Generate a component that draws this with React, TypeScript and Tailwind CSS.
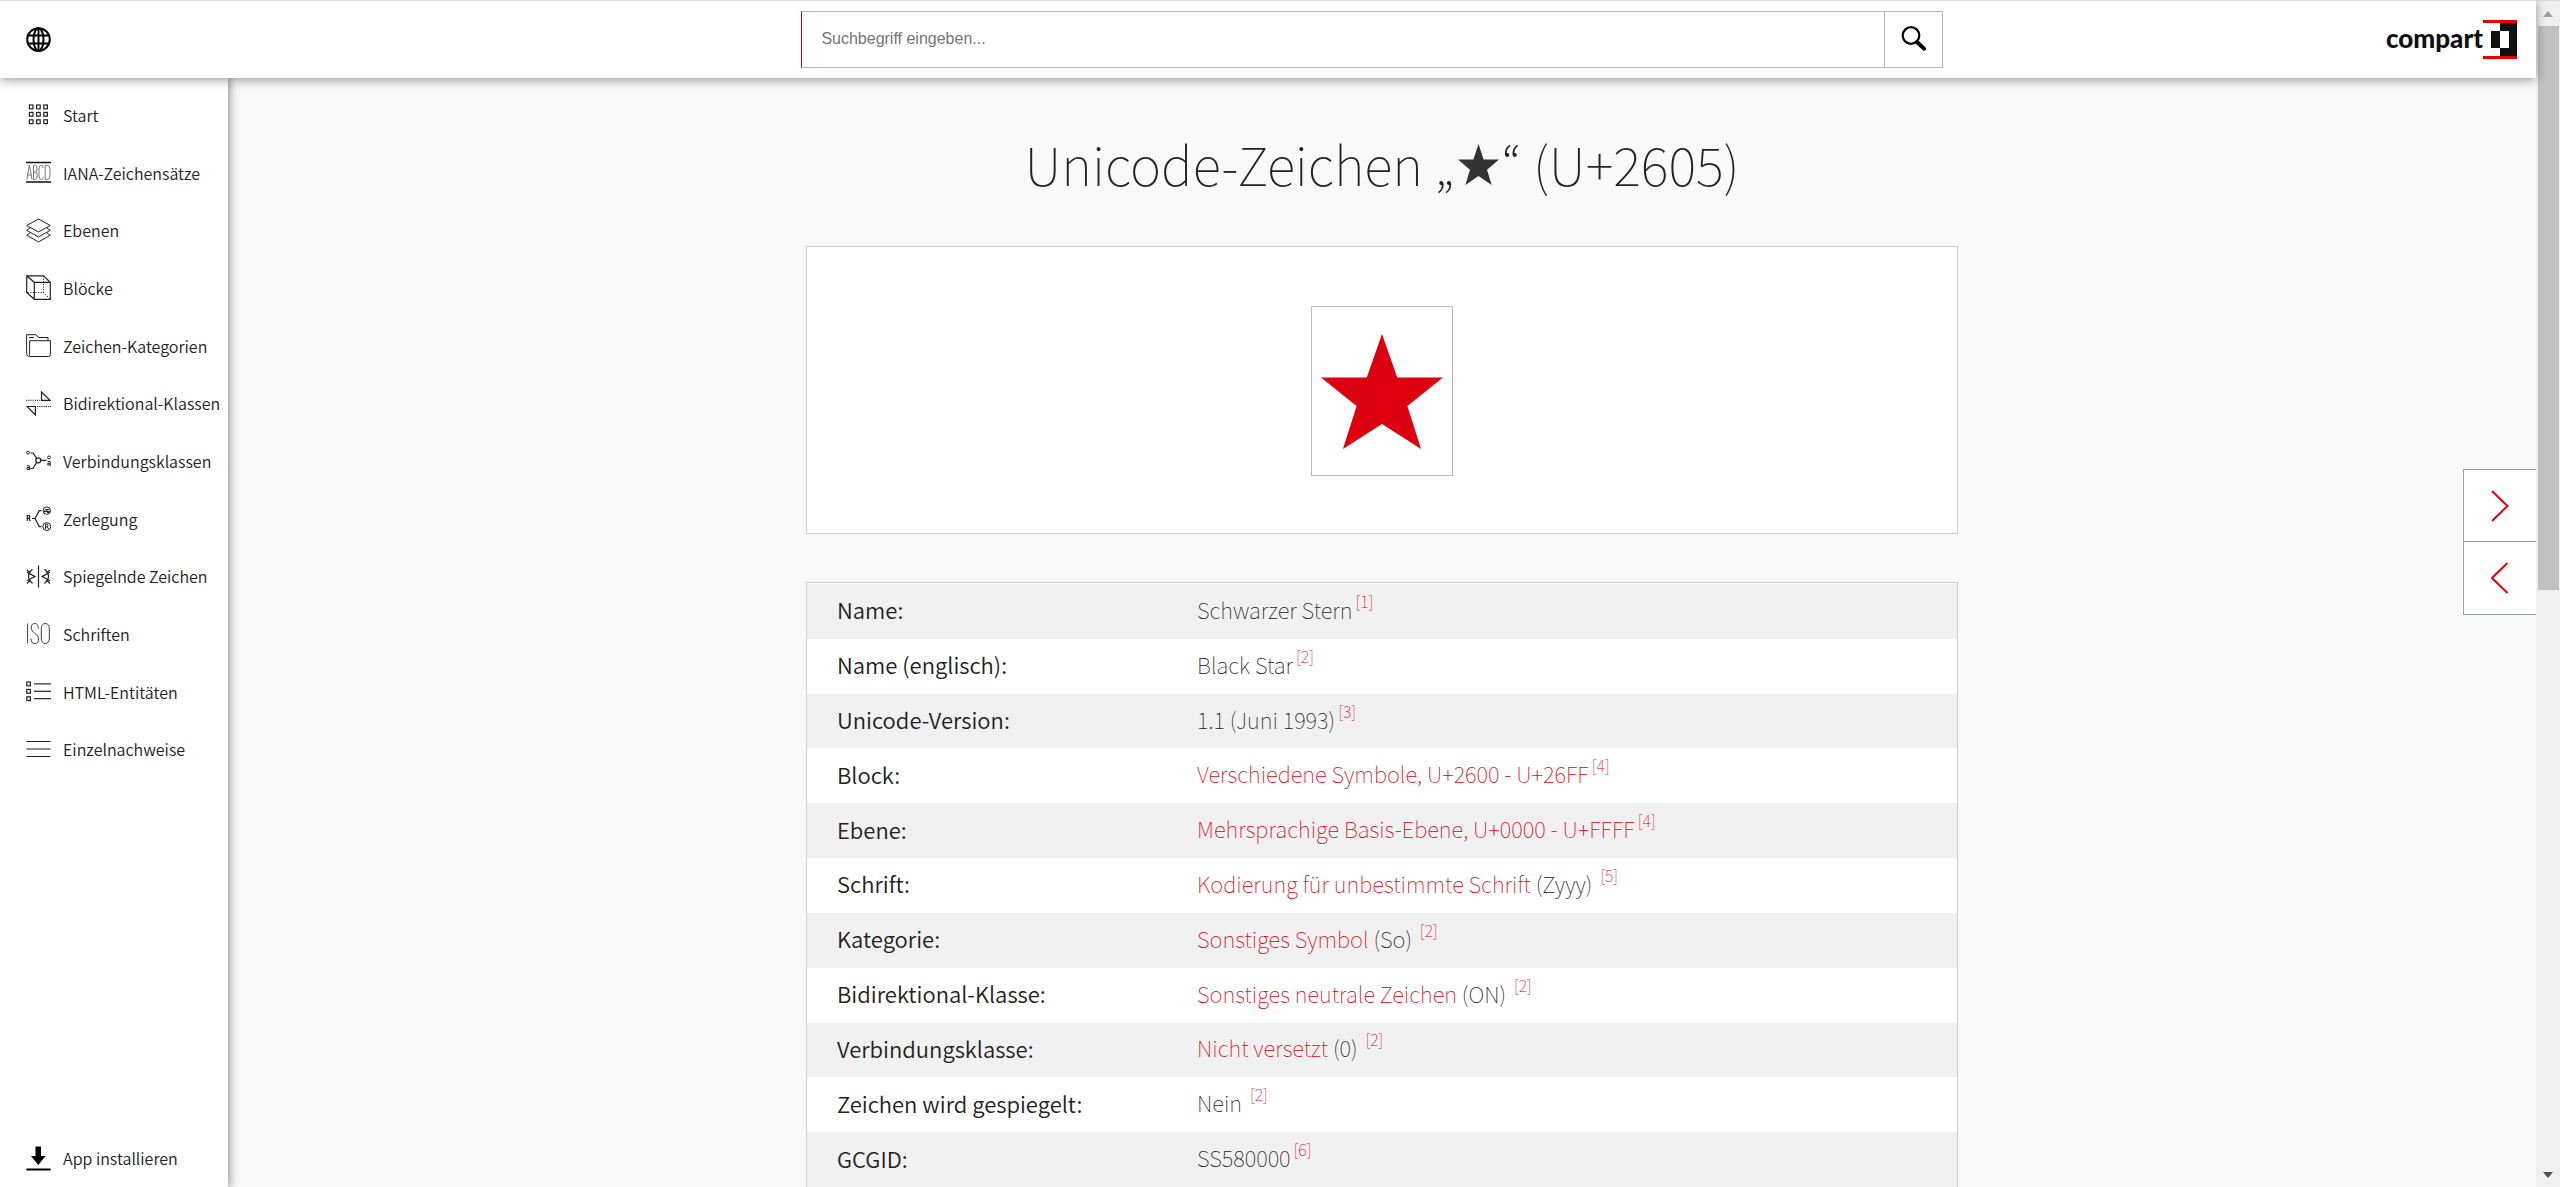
import React from "react";

const sans = "font-['Noto_Sans_CJK_KR','Noto_Sans_CJK_SC','Open_Sans',sans-serif]";

function Icon({ children }: { children: React.ReactNode }) {
  return (
    <svg
      className="size-[25px] shrink-0"
      viewBox="0 0 25 25"
      fill="none"
      stroke="#222"
      strokeWidth="1"
      aria-hidden="true"
    >
      {children}
    </svg>
  );
}

const navItems: { label: string; icon: React.ReactNode }[] = [
  {
    label: "Start",
    icon: (
      <g strokeWidth="1.2">
        {[3, 10.4, 17.8].map((y) =>
          [3.4, 10.6, 17.8].map((x) => <rect key={`${x}-${y}`} x={x} y={y} width="3.6" height="3.8" />)
        )}
      </g>
    ),
  },
  {
    label: "IANA-Zeichensätze",
    icon: (
      <g>
        <path d="M0 2.5H25M0 22H25" strokeWidth="1.3" stroke="#111" />
        <path
          d="M.8 19.5 3.4 5.2 6 19.5M1.6 15H5.2M7.5 5.2V19.5H9.3Q11.3 19.5 11.3 15.9 11.3 12.2 9.3 12.2H7.5M9.3 12.2Q11 12.2 11 8.7 11 5.2 9.3 5.2H7.5M17.2 8Q17 5.2 15.2 5.2 13 5.2 13 9V15.7Q13 19.5 15.2 19.5 17 19.5 17.2 16.7M19.2 5.2V19.5H20.8Q24 19.5 24 15.5V9.2Q24 5.2 20.8 5.2Z"
          strokeWidth=".8"
          stroke="#555"
        />
      </g>
    ),
  },
  {
    label: "Ebenen",
    icon: (
      <path d="M12.5 1 24.3 7.5 12.5 14 .7 7.5ZM4.5 9.7.7 12.3 12.5 19 24.3 12.3 20.5 9.7M4.5 14.7.7 17.2 12.5 24 24.3 17.2 20.5 14.7" />
    ),
  },
  {
    label: "Blöcke",
    icon: (
      <g>
        <path d="M.7.8H17.5L24.3 7.3V24.3H8.3L.7 17.5ZM.7.8 8.3 7.3H24.3M8.3 7.3V24.3" strokeWidth="1.2" />
        <path d="M17.5 1V17.5H1M17.5 17.5 24 24" strokeDasharray="1.2 1.4" />
      </g>
    ),
  },
  {
    label: "Zeichen-Kategorien",
    icon: (
      <g>
        <path d="M3.5 23.5H22.5Q24.4 23.5 24.4 21.5V7.7H3.6V21.5Q3.4 23.5 2.6 23.5.6 22.5.6 20.5V1.7H9.7L13 4.5H22V7.5" />
        <path d="M3 4.5H8" />
      </g>
    ),
  },
  {
    label: "Bidirektional-Klassen",
    icon: (
      <g>
        <path d="M15.5 1V9.3H24ZM1 15.5H9.4V24Z" strokeWidth="1.2" />
        <path d="M0 9.3H14M11 15.5H25" strokeDasharray="1.2 1" />
      </g>
    ),
  },
  {
    label: "Verbindungsklassen",
    icon: (
      <g>
        <circle cx="12.3" cy="12.3" r="2.5" strokeWidth="1.3" />
        <path d="M4.3 5H7L10.6 10.2M4.3 20.5H7L10.6 14.4M15 12.3H20.5" strokeWidth="1.2" />
        <circle cx="2" cy="4.6" r="1.4" />
        <circle cx="23" cy="9.4" r="1.4" />
        <path d="M.8 17.8H3.4V21.6M3.4 19.5H1V21.4H4.2M21.7 13.4H24.2V17.3M24.2 15.2H21.8V17H25" />
      </g>
    ),
  },
  {
    label: "Zerlegung",
    icon: (
      <g>
        <path d="M6 12.5H9M9 12.5 13.2 4.7H15.5M9 12.5 13.2 20.6H15.5" strokeWidth="1.2" />
        <path d="M1.2 15V9.6H3.4Q4.3 11 3.2 12.3H1.2M2.8 12.3 4.4 15.2" strokeWidth="1.2" />
        <circle cx="20.8" cy="4.6" r="3.7" />
        <path d="M17.8 6.5 19.6 3.4H21V6.4H24M18 5.4H24M21 3.5H23.4" />
        <circle cx="20.8" cy="20.6" r="4" />
        <path d="M19.6 23V18.2H21.5Q22.6 19.5 21.5 20.7H19.6M21.2 20.7 22.6 23" />
      </g>
    ),
  },
  {
    label: "Spiegelnde Zeichen",
    icon: (
      <g>
        <path d="M12.5 1.5V23.5" strokeWidth="1.2" />
        <path d="M1 8.2 9 12.6 1 16.8M6.5 5.2Q-1.5 12 6.5 19.5M1 6 4.5 9M1 19.5 4.5 16" strokeWidth="1.2" />
        <path d="M24 8.2 16 12.6 24 16.8M18.5 5.2Q26.5 12 18.5 19.5M24 6 20.5 9M24 19.5 20.5 16" strokeWidth="1.2" />
      </g>
    ),
  },
  {
    label: "Schriften",
    icon: (
      <path
        d="M1.6 2.5V22.5M12.3 7.5Q12.3 2.5 8.7 2.5 5.2 2.5 5.2 7 5.2 10 8.8 12.2 12.6 14.6 12.6 18 12.6 22.5 8.8 22.5 4.9 22.5 4.9 17.5M15.3 8Q15.3 2.5 19.3 2.5 23.3 2.5 23.3 8V17Q23.3 22.5 19.3 22.5 15.3 22.5 15.3 17Z"
        stroke="#444"
      />
    ),
  },
  {
    label: "HTML-Entitäten",
    icon: (
      <g strokeWidth="1.2">
        {[3, 10.4, 17.8].map((y) => (
          <g key={y}>
            <rect x=".8" y={y} width="3.6" height="3.8" />
            <path d={`M8 ${y + 1.9}H25`} />
          </g>
        ))}
      </g>
    ),
  },
  { label: "Einzelnachweise", icon: <path d="M.5 4.5H24.5M.5 12H24.5M.5 19.5H24.5" strokeWidth="1.2" /> },
];

type Row = { name: string; link?: string; text?: string; note: string };

const rows: Row[] = [
  { name: "Name:", text: "Schwarzer Stern", note: "[1]" },
  { name: "Name (englisch):", text: "Black Star", note: "[2]" },
  { name: "Unicode-Version:", text: "1.1 (Juni 1993)", note: "[3]" },
  { name: "Block:", link: "Verschiedene Symbole, U+2600 - U+26FF", note: "[4]" },
  { name: "Ebene:", link: "Mehrsprachige Basis-Ebene, U+0000 - U+FFFF", note: "[4]" },
  { name: "Schrift:", link: "Kodierung für unbestimmte Schrift", text: " (Zyyy) ", note: "[5]" },
  { name: "Kategorie:", link: "Sonstiges Symbol", text: " (So) ", note: "[2]" },
  { name: "Bidirektional-Klasse:", link: "Sonstiges neutrale Zeichen", text: " (ON) ", note: "[2]" },
  { name: "Verbindungsklasse:", link: "Nicht versetzt", text: " (0) ", note: "[2]" },
  { name: "Zeichen wird gespiegelt:", text: "Nein ", note: "[2]" },
  { name: "GCGID:", text: "SS580000", note: "[6]" },
];

const starPoints = "50,0 62.5,37.8 100,37.8 70.8,62.5 82,100 50,78.2 18,100 29.2,62.5 0,37.8 37.5,37.8";

function Header() {
  return (
    <header className="relative z-20 grid h-[78px] shrink-0 grid-cols-[31.6%_45%_1fr] items-center border-t border-[#ddd] bg-white shadow-[0_2px_10px_rgba(0,0,0,0.4)]">
      <button type="button" aria-label="Sprache" className="ml-[26px] size-[25px]">
        <svg viewBox="0 0 25 25" fill="none" stroke="#000" strokeWidth="2" aria-hidden="true">
          <circle cx="12.5" cy="12.5" r="11.3" />
          <ellipse cx="12.5" cy="12.5" rx="5" ry="11.3" />
          <path d="M12.5 1V24M2.2 8.5H22.8M2.2 16.5H22.8" strokeWidth="1.9" />
        </svg>
      </button>
      <form className="flex h-[57px]" onSubmit={(e) => e.preventDefault()}>
        <input
          type="text"
          aria-label="Suchbegriff"
          placeholder="Suchbegriff eingeben..."
          className="min-w-0 flex-1 border border-[#b8b8b8] border-l-[#cc0000] bg-white px-[19px] pb-[2px] font-['Liberation_Sans',sans-serif] text-base placeholder:text-[#757575]"
        />
        <button type="submit" aria-label="Suchen" className="flex w-[58px] items-center justify-center border border-l-0 border-[#b8b8b8] bg-white pb-[2px]">
          <svg className="size-[25px]" viewBox="0 0 25 25" fill="none" stroke="#000" aria-hidden="true">
            <circle cx="10" cy="9.5" r="8.3" strokeWidth="2.2" />
            <path d="M16 16 23 22.6" strokeWidth="4" strokeLinecap="round" />
          </svg>
        </button>
      </form>
      <a href="#compart" aria-label="compart" className="mr-[19px] flex items-center justify-self-end text-[#111]">
        <span className="pb-1 font-['Lato',sans-serif] text-[26px] leading-[34px] font-black">compart</span>
        <svg className="h-[39px] w-[34px]" viewBox="0 0 34 39" aria-hidden="true">
          <path d="M17 3H34V36H17Z" fill="#111110" />
          <path d="M8 11H17V28H8Z" fill="#111110" />
          <path d="M17 11H26V28H17Z" fill="#fff" />
          <path d="M0 0H34V3H0ZM0 36H34V39H0Z" fill="#eb0000" />
        </svg>
      </a>
    </header>
  );
}

function Sidebar() {
  return (
    <aside className="relative z-10 flex w-[228px] shrink-0 flex-col justify-between bg-white font-[350] shadow-[2px_0_8px_rgba(0,0,0,0.4)]">
      <nav className="mt-2 flex h-[692px] flex-col">
        {navItems.map((item) => (
          <a key={item.label} href="#" className="flex flex-1 items-center gap-3 pl-[26px] whitespace-nowrap">
            <Icon>{item.icon}</Icon>
            {item.label}
          </a>
        ))}
      </nav>
      <button type="button" className="flex h-[58px] items-center gap-3 pl-[26px] whitespace-nowrap">
        <svg className="size-[25px]" viewBox="0 0 25 25" aria-hidden="true">
          <path d="M9.5 0.5H15V10H19.5L12.3 19 5 10H9.5Z" fill="#000" />
          <path d="M1.2 23.5H23.8" stroke="#000" strokeWidth="2.2" strokeLinecap="round" />
        </svg>
        App installieren
      </button>
    </aside>
  );
}

function Pager() {
  return (
    <div className="absolute top-[391px] right-0 flex w-[73px] flex-col divide-y divide-[#9ca4ab] border border-r-0 border-[#9ca4ab] bg-white">
      {[
        { label: "Weiter", d: "M1 1 16.5 16 1 31" },
        { label: "Zurück", d: "M16.5 1 1 16 16.5 31" },
      ].map((b) => (
        <button key={b.label} type="button" aria-label={b.label} className="flex h-[72px] items-center justify-center">
          <svg className="h-8 w-[18px]" viewBox="0 0 18 32" fill="none" stroke="#e2000f" strokeWidth="2" aria-hidden="true">
            <path d={b.d} />
          </svg>
        </button>
      ))}
    </div>
  );
}

function ScrollTrack() {
  return (
    <div className="flex w-6 shrink-0 flex-col items-center justify-between border-t border-[#ddd] bg-[#f0f0f0]" aria-hidden="true">
      <div className="flex w-full flex-1 flex-col items-center">
        <svg className="h-[25px] w-[10px]" viewBox="0 0 10 25">
          <path d="M5 10 10 16H0Z" fill="#a0a0a0" />
        </svg>
        <div className="mx-auto h-[48.6%] w-[21px] bg-[#c1c1c1]" />
      </div>
      <svg className="h-[25px] w-[10px]" viewBox="0 0 10 25">
        <path d="M0 10H10L5 16Z" fill="#505050" />
      </svg>
    </div>
  );
}

export default function App() {
  return (
    <div className={`flex h-screen overflow-hidden bg-[#f9f9f9] text-base leading-6 font-light text-[#222] ${sans}`}>
      <div className="flex min-w-0 flex-1 flex-col">
        <Header />
        <div className="relative flex min-h-0 flex-1">
          <Sidebar />
          <main className="flex min-w-0 flex-1 flex-col items-center overflow-hidden">
            <h1 className="mt-[45px] text-[53px] leading-20 font-thin whitespace-nowrap text-[#222]">
              Unicode-Zeichen „
              <svg className="mx-[3px] inline-block size-[41px] align-[1px]" viewBox="0 0 100 100" aria-label="★" role="img">
                <polygon points={starPoints} fill="#333" />
              </svg>
              “ (U+2605)
            </h1>
            <section className="mt-[43px] flex w-full max-w-[1152px] justify-center border border-[#d0d0d0] bg-white pt-[59px] pb-[57px]">
              <div className="flex h-[170px] w-[142px] items-center justify-center border border-[#bbb]">
                <svg className="h-[115px] w-[122px]" viewBox="0 0 100 100" preserveAspectRatio="none" aria-label="★" role="img">
                  <polygon points={starPoints} fill="#dd0010" />
                </svg>
              </div>
            </section>
            <div className="mt-12 w-full max-w-[1152px] border border-[#d0d0d0] bg-white pt-px">
              <table className="h-[603px] w-full table-fixed border-collapse text-left text-[22px] text-[#222]">
                <colgroup>
                  <col className="w-[390px]" />
                  <col />
                </colgroup>
                <tbody>
                  {rows.map((row) => (
                    <tr key={row.name} className="odd:bg-[#f1f1f1]">
                      <th scope="row" className="pb-1 pl-[30px] font-[350]">
                        {row.name}
                      </th>
                      <td className="pb-0.5 font-thin whitespace-pre">
                        {row.link && (
                          <a href="#" className="text-[#dd0010]">
                            {row.link}
                          </a>
                        )}
                        {row.text}
                        <sup className="top-[-11px] ml-[3px] text-base">
                          <a href="#" className="text-[#dd0010]">
                            {row.note}
                          </a>
                        </sup>
                      </td>
                    </tr>
                  ))}
                </tbody>
              </table>
            </div>
          </main>
          <Pager />
        </div>
      </div>
      <ScrollTrack />
    </div>
  );
}
